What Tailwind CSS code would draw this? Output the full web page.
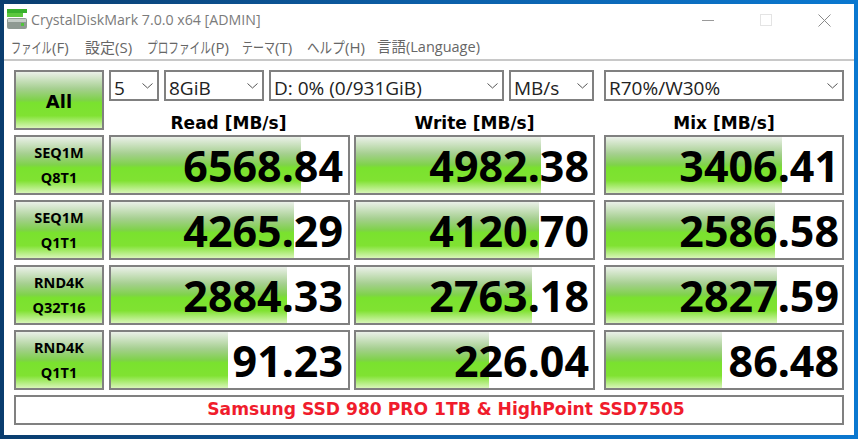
<!DOCTYPE html>
<html lang="ja">
<head>
    <meta charset="utf-8">
    <title>CrystalDiskMark</title>
    <script src="https://cdn.jsdelivr.net/npm/@tailwindcss/browser@4"></script>
</head>
<body class="w-[858px] h-[439px] overflow-hidden bg-gradient-to-r from-[#0a3d6e] via-[#0c5fa8] to-[#0a78d0] p-[4px] font-['Open_Sans','Noto_Sans_CJK_JP',sans-serif]">
<div class="w-[850px] h-[431px] bg-white flex flex-col">

    <!-- Title bar -->
    <div class="h-[32px] flex items-center pl-[3px] shrink-0">
        <svg width="24" height="24" viewBox="0 0 24 24" class="shrink-0">
            <rect x="0" y="1" width="20" height="4" fill="#38b02c"/>
            <rect x="0" y="5" width="16" height="4" fill="#5cc83e"/>
            <rect x="0" y="10" width="20" height="11" rx="2" fill="#8f9a92"/>
            <rect x="1" y="11" width="18" height="3" fill="#c4ccc6"/>
            <rect x="14" y="15" width="3" height="3" fill="#4fc43a"/>
        </svg>
        <span class="text-[14.2px] text-[#7b7b7b]">CrystalDiskMark 7.0.0 x64 [ADMIN]</span>
        <div class="ml-auto flex items-center mr-[1px]">
            <div class="w-[58px] flex justify-center"><div class="w-[12px] h-[1px] bg-[#9a9a9a]"></div></div>
            <div class="w-[58px] flex justify-center"><div class="w-[12px] h-[12px] border border-[#e4e4e4]"></div></div>
            <div class="w-[58px] flex justify-center">
                <svg width="13" height="13" viewBox="0 0 13 13"><path d="M0.5 0.5L12.5 12.5M12.5 0.5L0.5 12.5" stroke="#8a8a8a" fill="none"/></svg>
            </div>
        </div>
    </div>

    <!-- Menu -->
    <div class="h-[22px] flex items-center pl-[7px] text-[15px] text-[#666] whitespace-nowrap border-b-2 border-[#c8c8c8] shrink-0 box-content pb-[1px]">
        <div class="w-[58px] flex"><span class="inline-block w-[41px] origin-left scale-x-[0.68]">ファイル</span><span>(F)</span></div>
        <div class="w-[46px] ml-[16px]">設定(S)</div>
        <div class="w-[80px] ml-[16px] flex"><span class="inline-block w-[64px] origin-left scale-x-[0.71]">プロファイル</span><span>(P)</span></div>
        <div class="w-[49px] ml-[15px] flex"><span class="inline-block w-[33px] origin-left scale-x-[0.73]">テーマ</span><span>(T)</span></div>
        <div class="w-[54px] ml-[16px] flex"><span class="inline-block w-[38px] origin-left scale-x-[0.84]">ヘルプ</span><span>(H)</span></div>
        <div class="w-[103px] ml-[16px] text-[14.5px]">言語(Language)</div>
    </div>

    <!-- Main -->
    <div class="pt-[9px] pl-[10px] flex flex-col gap-[5px]">

        <div class="flex gap-[5px] h-[60px]">
            <div class="w-[90px] h-[60px] pt-[3px] border-2 border-[#808080] bg-[linear-gradient(#eaf0e8,#a5cf8f_30%,#7fd24a_50%,#7ae22e_55%,#80e232_78%,#d8f5b8)] flex items-center justify-center text-[18px] font-bold font-['DejaVu_Sans',sans-serif] text-black">All</div>
            <div class="flex flex-col">
                <div class="flex h-[31px] text-[19px] text-[#222]">
                    <div class="w-[50px] border-2 border-[#808080] flex items-center justify-between pl-[3px] pr-[4px]"><span class="pt-[6px]">5</span>
                        <svg width="11" height="6" viewBox="0 0 11 6"><path d="M0.5 0.5L5.5 5L10.5 0.5" stroke="#555" fill="none"/></svg>
                    </div>
                    <div class="w-[100px] ml-[5px] border-2 border-[#808080] flex items-center justify-between pl-[3px] pr-[4px]"><span class="pt-[6px]">8GiB</span>
                        <svg width="11" height="6" viewBox="0 0 11 6"><path d="M0.5 0.5L5.5 5L10.5 0.5" stroke="#555" fill="none"/></svg>
                    </div>
                    <div class="w-[235px] ml-[5px] border-2 border-[#808080] flex items-center justify-between pl-[3px] pr-[4px]"><span class="pt-[6px]">D: 0% (0/931GiB)</span>
                        <svg width="11" height="6" viewBox="0 0 11 6"><path d="M0.5 0.5L5.5 5L10.5 0.5" stroke="#555" fill="none"/></svg>
                    </div>
                    <div class="w-[85px] ml-[5px] border-2 border-[#808080] flex items-center justify-between pl-[3px] pr-[4px]"><span class="pt-[6px]">MB/s</span>
                        <svg width="11" height="6" viewBox="0 0 11 6"><path d="M0.5 0.5L5.5 5L10.5 0.5" stroke="#555" fill="none"/></svg>
                    </div>
                    <div class="w-[240px] ml-[10px] border-2 border-[#808080] flex items-center justify-between pl-[3px] pr-[4px]"><span class="pt-[6px]">R70%/W30%</span>
                        <svg width="11" height="6" viewBox="0 0 11 6"><path d="M0.5 0.5L5.5 5L10.5 0.5" stroke="#555" fill="none"/></svg>
                    </div>
                </div>
                <div class="flex h-[34px] pt-[12px] leading-[20px] text-[17px] font-bold font-['DejaVu_Sans',sans-serif] text-black">
                    <div class="w-[239px] text-center">Read [MB/s]</div>
                    <div class="w-[241px] ml-[6px] text-center">Write [MB/s]</div>
                    <div class="w-[240px] ml-[9px] text-center">Mix [MB/s]</div>
                </div>
            </div>
        </div>

        <div class="flex flex-col gap-[5px]">
            <div class="flex h-[60px]">
                <div class="w-[90px] border-2 border-[#808080] bg-[linear-gradient(#eaf0e8,#a5cf8f_30%,#7fd24a_50%,#7ae22e_55%,#80e232_78%,#d8f5b8)] flex flex-col items-center justify-center text-[14.5px] leading-[25px] font-bold font-['Noto_Sans',sans-serif] text-black"><span>SEQ1M</span><span>Q8T1</span></div>
                <div class="relative w-[241px] ml-[5px] border-2 border-[#808080] bg-white"><div class="absolute left-0 top-0 bottom-0 w-[190px] bg-[linear-gradient(#eaf0e8,#a5cf8f_30%,#7fd24a_50%,#7ae22e_55%,#80e232_78%,#d8f5b8)]"></div><div class="relative h-full flex items-center justify-end pr-[5px] text-[43px] leading-none font-bold font-['Noto_Sans',sans-serif] text-black">6568.84</div></div>
                <div class="relative w-[241px] ml-[4px] border-2 border-[#808080] bg-white"><div class="absolute left-0 top-0 bottom-0 w-[185px] bg-[linear-gradient(#eaf0e8,#a5cf8f_30%,#7fd24a_50%,#7ae22e_55%,#80e232_78%,#d8f5b8)]"></div><div class="relative h-full flex items-center justify-end pr-[4px] text-[43px] leading-none font-bold font-['Noto_Sans',sans-serif] text-black">4982.38</div></div>
                <div class="relative w-[240px] ml-[9px] border-2 border-[#808080] bg-white"><div class="absolute left-0 top-0 bottom-0 w-[176px] bg-[linear-gradient(#eaf0e8,#a5cf8f_30%,#7fd24a_50%,#7ae22e_55%,#80e232_78%,#d8f5b8)]"></div><div class="relative h-full flex items-center justify-end pr-[3px] text-[43px] leading-none font-bold font-['Noto_Sans',sans-serif] text-black">3406.41</div></div>
            </div>
            <div class="flex h-[60px]">
                <div class="w-[90px] border-2 border-[#808080] bg-[linear-gradient(#eaf0e8,#a5cf8f_30%,#7fd24a_50%,#7ae22e_55%,#80e232_78%,#d8f5b8)] flex flex-col items-center justify-center text-[14.5px] leading-[25px] font-bold font-['Noto_Sans',sans-serif] text-black"><span>SEQ1M</span><span>Q1T1</span></div>
                <div class="relative w-[241px] ml-[5px] border-2 border-[#808080] bg-white"><div class="absolute left-0 top-0 bottom-0 w-[183px] bg-[linear-gradient(#eaf0e8,#a5cf8f_30%,#7fd24a_50%,#7ae22e_55%,#80e232_78%,#d8f5b8)]"></div><div class="relative h-full flex items-center justify-end pr-[5px] text-[43px] leading-none font-bold font-['Noto_Sans',sans-serif] text-black">4265.29</div></div>
                <div class="relative w-[241px] ml-[4px] border-2 border-[#808080] bg-white"><div class="absolute left-0 top-0 bottom-0 w-[183px] bg-[linear-gradient(#eaf0e8,#a5cf8f_30%,#7fd24a_50%,#7ae22e_55%,#80e232_78%,#d8f5b8)]"></div><div class="relative h-full flex items-center justify-end pr-[4px] text-[43px] leading-none font-bold font-['Noto_Sans',sans-serif] text-black">4120.70</div></div>
                <div class="relative w-[240px] ml-[9px] border-2 border-[#808080] bg-white"><div class="absolute left-0 top-0 bottom-0 w-[169px] bg-[linear-gradient(#eaf0e8,#a5cf8f_30%,#7fd24a_50%,#7ae22e_55%,#80e232_78%,#d8f5b8)]"></div><div class="relative h-full flex items-center justify-end pr-[3px] text-[43px] leading-none font-bold font-['Noto_Sans',sans-serif] text-black">2586.58</div></div>
            </div>
            <div class="flex h-[60px]">
                <div class="w-[90px] border-2 border-[#808080] bg-[linear-gradient(#eaf0e8,#a5cf8f_30%,#7fd24a_50%,#7ae22e_55%,#80e232_78%,#d8f5b8)] flex flex-col items-center justify-center text-[14.5px] leading-[25px] font-bold font-['Noto_Sans',sans-serif] text-black"><span>RND4K</span><span>Q32T16</span></div>
                <div class="relative w-[241px] ml-[5px] border-2 border-[#808080] bg-white"><div class="absolute left-0 top-0 bottom-0 w-[176px] bg-[linear-gradient(#eaf0e8,#a5cf8f_30%,#7fd24a_50%,#7ae22e_55%,#80e232_78%,#d8f5b8)]"></div><div class="relative h-full flex items-center justify-end pr-[5px] text-[43px] leading-none font-bold font-['Noto_Sans',sans-serif] text-black">2884.33</div></div>
                <div class="relative w-[241px] ml-[4px] border-2 border-[#808080] bg-white"><div class="absolute left-0 top-0 bottom-0 w-[176px] bg-[linear-gradient(#eaf0e8,#a5cf8f_30%,#7fd24a_50%,#7ae22e_55%,#80e232_78%,#d8f5b8)]"></div><div class="relative h-full flex items-center justify-end pr-[4px] text-[43px] leading-none font-bold font-['Noto_Sans',sans-serif] text-black">2763.18</div></div>
                <div class="relative w-[240px] ml-[9px] border-2 border-[#808080] bg-white"><div class="absolute left-0 top-0 bottom-0 w-[171px] bg-[linear-gradient(#eaf0e8,#a5cf8f_30%,#7fd24a_50%,#7ae22e_55%,#80e232_78%,#d8f5b8)]"></div><div class="relative h-full flex items-center justify-end pr-[3px] text-[43px] leading-none font-bold font-['Noto_Sans',sans-serif] text-black">2827.59</div></div>
            </div>
            <div class="flex h-[60px]">
                <div class="w-[90px] border-2 border-[#808080] bg-[linear-gradient(#eaf0e8,#a5cf8f_30%,#7fd24a_50%,#7ae22e_55%,#80e232_78%,#d8f5b8)] flex flex-col items-center justify-center text-[14.5px] leading-[25px] font-bold font-['Noto_Sans',sans-serif] text-black"><span>RND4K</span><span>Q1T1</span></div>
                <div class="relative w-[241px] ml-[5px] border-2 border-[#808080] bg-white"><div class="absolute left-0 top-0 bottom-0 w-[117px] bg-[linear-gradient(#eaf0e8,#a5cf8f_30%,#7fd24a_50%,#7ae22e_55%,#80e232_78%,#d8f5b8)]"></div><div class="relative h-full flex items-center justify-end pr-[5px] text-[43px] leading-none font-bold font-['Noto_Sans',sans-serif] text-black">91.23</div></div>
                <div class="relative w-[241px] ml-[4px] border-2 border-[#808080] bg-white"><div class="absolute left-0 top-0 bottom-0 w-[133px] bg-[linear-gradient(#eaf0e8,#a5cf8f_30%,#7fd24a_50%,#7ae22e_55%,#80e232_78%,#d8f5b8)]"></div><div class="relative h-full flex items-center justify-end pr-[4px] text-[43px] leading-none font-bold font-['Noto_Sans',sans-serif] text-black">226.04</div></div>
                <div class="relative w-[240px] ml-[9px] border-2 border-[#808080] bg-white"><div class="absolute left-0 top-0 bottom-0 w-[116px] bg-[linear-gradient(#eaf0e8,#a5cf8f_30%,#7fd24a_50%,#7ae22e_55%,#80e232_78%,#d8f5b8)]"></div><div class="relative h-full flex items-center justify-end pr-[3px] text-[43px] leading-none font-bold font-['Noto_Sans',sans-serif] text-black">86.48</div></div>
            </div>
        </div>

        <div class="w-[830px] h-[30px] border-2 border-[#808080] pl-[34px] flex items-center justify-center text-[17.15px] font-bold font-['DejaVu_Sans',sans-serif] text-[#f01c2c]">Samsung SSD 980 PRO 1TB &amp; HighPoint SSD7505</div>
    </div>
</div>
</body>
</html>
